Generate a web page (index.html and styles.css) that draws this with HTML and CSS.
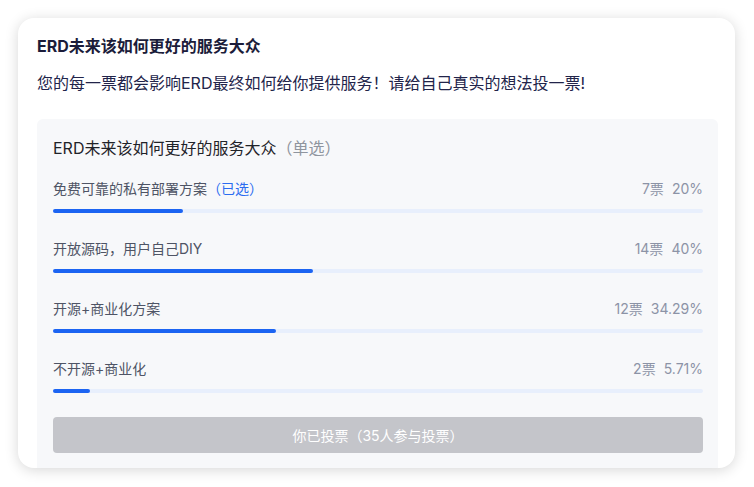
FILE: index.html
```html
<!DOCTYPE html>
<html lang="zh-CN">
<head>
<meta charset="utf-8">
<link rel="stylesheet" href="styles.css">
</head>
<body>
<div class="card">
  <h1 class="title">ERD未来该如何更好的服务大众</h1>
  <p class="desc">您的每一票都会影响ERD最终如何给你提供服务！请给自己真实的想法投一票!</p>
  <div class="panel">
    <div class="question">ERD未来该如何更好的服务大众<span class="type">（单选）</span></div>
    <div class="options">
      <div class="option">
        <div class="row"><span class="label">免费可靠的私有部署方案<span class="chosen">（已选）</span></span><span class="stat"><span>7票</span><span>20%</span></span></div>
        <div class="bar"><div class="fill" style="width:20%"></div></div>
      </div>
      <div class="option">
        <div class="row"><span class="label">开放源码，用户自己DIY</span><span class="stat"><span>14票</span><span>40%</span></span></div>
        <div class="bar"><div class="fill" style="width:40%"></div></div>
      </div>
      <div class="option">
        <div class="row"><span class="label">开源+商业化方案</span><span class="stat"><span>12票</span><span>34.29%</span></span></div>
        <div class="bar"><div class="fill" style="width:34.29%"></div></div>
      </div>
      <div class="option">
        <div class="row"><span class="label">不开源+商业化</span><span class="stat"><span>2票</span><span>5.71%</span></span></div>
        <div class="bar"><div class="fill" style="width:5.71%"></div></div>
      </div>
    </div>
    <button class="voted" disabled>你已投票（35人参与投票）</button>
  </div>
</div>
</body>
</html>
```

FILE: styles.css
```css
* { box-sizing: border-box; }
html, body { margin: 0; background: #ffffff; }
body {
  padding: 18px;
  font-family: "Inter", "Noto Sans CJK SC", sans-serif;
}
.card {
  width: 717px;
  height: 450px;
  background: #fff;
  border-radius: 16px;
  box-shadow: 0 2px 14px rgba(0,0,0,0.16);
  padding: 17px 17px 0 19px;
  overflow: hidden;
}
.title {
  margin: 0;
  font-size: 16px;
  line-height: 22px;
  font-weight: 700;
  color: #1b1c3a;
}
.desc {
  margin: 14px 0 0;
  font-size: 16px;
  line-height: 24px;
  color: #22244a;
}
.panel {
  margin-top: 24px;
  background: #f7f8fa;
  border-radius: 6px 6px 0 0;
  padding: 18px 15px 15px 16px;
}
.question {
  font-size: 16px;
  line-height: 22px;
  color: #1f2329;
}
.type { color: #8f959e; }
.options {
  margin-top: 20px;
  display: flex;
  flex-direction: column;
  gap: 26px;
}
.row {
  display: flex;
  justify-content: space-between;
  align-items: center;
  height: 20px;
  font-size: 14px;
  line-height: 20px;
}
.label { color: #4e5465; }
.chosen { color: #2b6cf0; }
.stat { color: #8c93a6; display: flex; gap: 8px; }
.bar {
  margin-top: 10px;
  height: 4px;
  border-radius: 2px;
  background: #e8effc;
}
.fill {
  height: 4px;
  border-radius: 2px;
  background: #1c64f2;
}
.voted {
  display: block;
  width: 100%;
  margin-top: 24px;
  height: 36px;
  border: 0;
  border-radius: 4px;
  background: #c4c5ca;
  color: #fff;
  font-family: inherit;
  font-size: 14px;
}
```
